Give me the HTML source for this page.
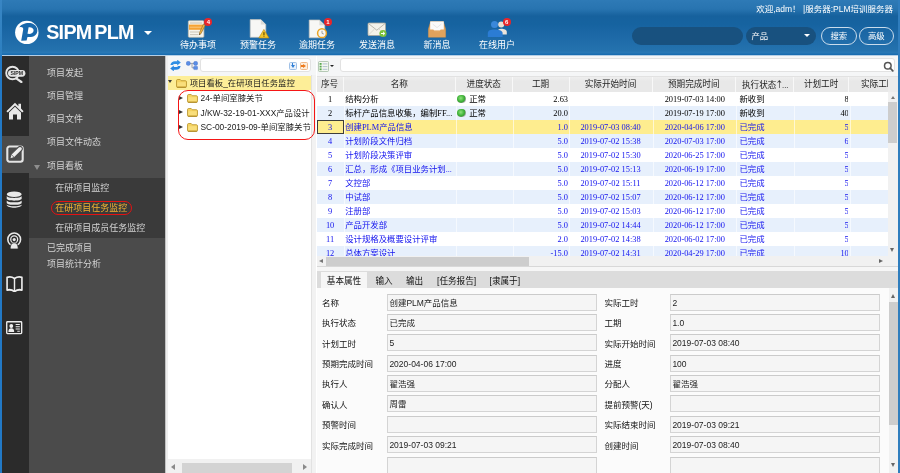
<!DOCTYPE html>
<html>
<head>
<meta charset="utf-8">
<title>SIPM PLM</title>
<style>
*{box-sizing:border-box;margin:0;padding:0}
html,body{width:900px;height:473px;overflow:hidden;background:#fff}
#wrap{position:absolute;left:-6px;top:-6px;width:912px;height:485px;background:#fff;filter:blur(.35px)}
#page{position:absolute;left:6px;top:6px;width:900px;height:473px}
body{position:relative;font-family:"Liberation Sans","Noto Sans CJK SC",sans-serif;font-size:8.4px;color:#222;line-height:1}
.abs{position:absolute}
/* header */
#hd{position:absolute;left:-6px;top:-6px;width:912px;height:61px;background:linear-gradient(to bottom,#2e7ab6 0,#2e7ab6 6px,#2874b0 15px,#16619d 22px,#1663a0 30px,#1e6aa8 44px,#2472ae 56px,#2a79b6 59px,#1a6db0 60px,#1a6db0 61px)}
#hdline{position:absolute;left:-6px;top:55px;width:912px;height:1px;background:#b5cfe6}
#edgeL{position:absolute;left:-6px;top:-6px;width:7.6px;height:485px;background:linear-gradient(#3a86c4 0,#2d80c0 61px,#2279c6 62px,#2279c6 100%)}
#edgeR{position:absolute;left:898px;top:-6px;width:8px;height:485px;background:#2f7dbd}
#brand{position:absolute;left:46.2px;top:20.4px;font-size:19.7px;font-weight:bold;color:#fff;line-height:24px;white-space:nowrap;letter-spacing:-0.7px;word-spacing:-2px}
.tb{position:absolute;top:0;width:60px;height:55px;text-align:center;color:#fff;font-size:9px}
.tb span{position:absolute;left:0;width:60px;top:40px;line-height:10px;white-space:nowrap}
.tb svg{position:absolute;left:19px;top:18px;overflow:visible}
.badge{position:absolute;width:8px;height:8px;border-radius:4px;background:#e8262a;color:#fff;font-size:6px;line-height:8px;text-align:center;font-weight:bold}
#welcome{position:absolute;right:7px;top:4px;color:#fff;font-size:8.5px;line-height:10px;white-space:nowrap}
.pill{position:absolute;top:26.5px;height:18.5px;border-radius:9.5px;background:#18517f;color:#fff;font-size:8.4px;line-height:18px}
.obtn{position:absolute;top:26.5px;height:18.5px;border-radius:9.5px;border:1px solid #c9dcec;color:#fff;font-size:8.4px;line-height:16.5px;text-align:center}
/* sidebar */
#ic{position:absolute;left:1.5px;top:56px;width:27px;height:423px;background:#2b2b2b}
#icsel{position:absolute;left:1.5px;top:135.8px;width:27px;height:36.8px;background:#4b4b4b}
#menu{position:absolute;left:28.5px;top:56px;width:136.5px;height:423px;background:#4b4b4b;color:#d4d4d4;font-size:9px}
#sub{position:absolute;left:0;top:122px;width:136.5px;height:60.2px;background:#3a3a3a}
.mi{position:absolute;left:18.5px;white-space:nowrap;line-height:10px}
.si{position:absolute;left:26.8px;white-space:nowrap;line-height:10px}
.sic{position:absolute;left:4px}
/* tree */
#strip{position:absolute;left:165px;top:56px;width:2.5px;height:423px;background:linear-gradient(to right,#c2c2c2 0,#c2c2c2 .9px,#eeeeee 1px,#eeeeee 100%)}
#ttb{position:absolute;left:167.5px;top:56px;width:148.5px;height:19.7px;background:#f5f6f7}
#tree{position:absolute;left:167.5px;top:75.7px;width:143.5px;height:383.3px;background:#fff;overflow:hidden}
#split{position:absolute;left:311.2px;top:75.4px;width:5.3px;height:403.6px;background:#f2f2f2;border-left:1px solid #e2e2e2}
.tr{position:absolute;left:0;width:143.5px;height:13.3px;white-space:nowrap;line-height:13.3px;font-size:8.4px;color:#1a1a1a}
.tr .tx{position:absolute;top:1.4px}
.tr svg{position:absolute}
.arr{position:absolute;width:0;height:0}
#redbox{position:absolute;left:177.8px;top:89.7px;width:137.2px;height:50.3px;border:1.4px solid #f51616;border-radius:10px}
#hsb1{position:absolute;left:167.5px;top:459px;width:143.5px;height:20px;background:#f1f1f1}
/* grid */
#gtb{position:absolute;left:316.5px;top:56px;width:581.5px;height:19.7px;background:#f5f6f7}
.sbox{position:absolute;background:#fff;border:1px solid #e2e2e2;border-radius:3px}
#gh{position:absolute;left:316.5px;top:75.7px;width:581.5px;height:16px;background:linear-gradient(#eeeeee,#e8e8e8 30%,#e8e8e8);font-family:"Liberation Serif","Noto Sans CJK SC",serif;font-size:8.6px;color:#222;overflow:hidden;border-top:1px solid #e2e2e2}
#gh span{position:absolute;top:0;height:16px;line-height:15px;text-align:center;border-right:1px solid #f8f8f8;white-space:nowrap;overflow:hidden}
#gb{position:absolute;left:316.5px;top:91.7px;width:571px;height:164.3px;overflow:hidden;background:#fff;font-family:"Liberation Serif","Noto Sans CJK SC",serif;font-size:8.4px}
.r{position:absolute;left:0;width:571px;height:14.06px;color:#000}
.r.alt{background:#e7f0fc}
.r.sel{background:#feed8f}
.r.blue{color:#1212ee}
.c{position:absolute;top:0;height:14.06px;line-height:15.2px;white-space:nowrap;overflow:hidden;border-left:1px solid rgba(255,255,255,.6)}
.c0{left:0;width:27.2px;text-align:center;border-left:0}
.c1{left:27.2px;width:112.3px;padding-left:.5px}
.c2{left:139.5px;width:56.5px;padding-left:12.2px}
.c3{left:196px;width:57px;text-align:right;padding-right:1.5px}
.c4{left:252px;width:83px;text-align:center}
.c5{left:336px;width:83.5px;text-align:center}
.c6{left:419.5px;width:57.7px;padding-left:2.5px}
.c7{left:477.2px;width:54.6px;text-align:right;padding-right:0}
.c7 b{font-weight:normal;margin-right:-.5px}
.c8{left:533.6px;width:37.4px}
.sel .c0{border:1px solid #3c3c3c;line-height:13.2px}
.dot{position:absolute;left:.3px;top:3px;width:8.4px;height:8.4px;border-radius:4.2px;background:radial-gradient(circle at 42% 40%,#8fe27c 0,#3bb035 50%,#49a045 60%,#a9aea9 72%,#b9bcb9 100%)}
#vsb1{position:absolute;left:887.5px;top:91.7px;width:10.5px;height:164.3px;background:#f1f1f1}
#hsb2{position:absolute;left:316.5px;top:256px;width:571px;height:10px;background:#f1f1f1}
#corner{position:absolute;left:887.5px;top:256px;width:10.5px;height:10px;background:#f1f1f1}
#gap{position:absolute;left:316.5px;top:266px;width:581.5px;height:5px;background:#f6f6f6;border-top:1px solid #d8d8d8}
/* tabs + detail */
#tabs{position:absolute;left:316.5px;top:271px;width:581.5px;height:16.5px;background:#dcdcdc;font-size:8.6px;color:#111}
#tabs span{position:absolute;top:0;height:16.5px;line-height:21.2px;white-space:nowrap}
#tabs .act{left:4.5px;width:46px;top:1px;height:15.5px;background:#f6f6f6;text-align:center;line-height:18.6px}
#det{position:absolute;left:316.5px;top:287.5px;width:581.5px;height:191.5px;background:#fbfbfb;overflow:hidden;font-size:8.5px}
.fr{position:absolute;left:0;width:572px;height:17px}
.fr label{position:absolute;top:1.4px;line-height:17.5px;white-space:nowrap;color:#111}
.l1{left:5.5px}
.l2{left:288px}
.in{position:absolute;top:0;height:17px;background:#f5f5f5;border:1px solid #d4d4d4;border-top-color:#cbcbcb;line-height:16.6px;padding-left:1.4px;white-space:nowrap;color:#222}
.i1{left:70.5px;width:210px}
.i2{left:353.5px;width:210px}
#vsb2{position:absolute;left:888.5px;top:287.5px;width:9.5px;height:191.5px;background:#f1f1f1}
.thumb{position:absolute;background:#cdcdcd}
.sa{position:absolute;width:0;height:0}
</style>
</head>
<body>
<div id="wrap"><div id="page">
<div id="hd"></div>
<div id="hdline"></div>

<!-- logo -->
<svg class="abs" style="left:14px;top:20px" width="26" height="26" viewBox="0 0 26 26">
  <circle cx="12.8" cy="12.4" r="11.7" fill="#fff"/>
  <path fill-rule="evenodd" d="M5.2 7.4 C7.6 3.4 15.4 1.6 20 4.4 C24.2 7 24.4 12.6 21.2 15.2 C18.8 17.2 15.6 17.3 13.5 16.9 L12.6 20.4 L7.2 20.8 L9.2 9.6 C9.5 7.6 8 6.6 5.2 7.4 Z M14.6 7.2 L13.5 13.8 C16.6 14.4 19.4 13.2 19.6 10.6 C19.8 8.2 17.4 6.8 14.6 7.2 Z" fill="#1868ac"/>
</svg>
<div id="brand">SIPM PLM</div>
<div class="sa" style="left:143.8px;top:31px;border-left:4.2px solid transparent;border-right:4.2px solid transparent;border-top:4.8px solid #fff"></div>

<!-- toolbar buttons -->
<div class="tb" style="left:168px">
  <svg width="20" height="20" viewBox="0 0 20 20">
    <rect x="1.3" y="2.7" width="15.6" height="16.6" rx="1" fill="#f7f4ec" stroke="#c4bfae" stroke-width=".7"/>
    <path d="M3 5 H15.2" stroke="#bdb8a8" stroke-width=".9"/>
    <rect x="2" y="6.6" width="14.2" height="5.2" fill="#f5a233"/>
    <path d="M2.6 9.2 H15.6" stroke="#fbd292" stroke-width=".8"/>
    <path d="M3 14 H12.2 M3 16.6 H11.4" stroke="#c6c1b2" stroke-width=".9"/>
    <path d="M16.4 6.2 L18.2 7.4 L14.2 15.2 L12.4 17 L12.6 14.4 Z" fill="#f0b648" stroke="#8f6420" stroke-width=".6"/>
    <path d="M12.4 17 L12.5 15.6 L13.5 16.1 Z" fill="#2e2e2e"/>
  </svg>
  <div class="badge" style="left:36.3px;top:17.8px">4</div>
  <span>待办事项</span>
</div>
<div class="tb" style="left:228px">
  <svg width="20" height="20" viewBox="0 0 20 20" style="left:21px">
    <path d="M1.2 1.6 H11.8 L16.8 6.6 V19.3 H1.2 Z" fill="#f7f7f5" stroke="#c0c0bc" stroke-width=".7"/>
    <path d="M11.8 1.6 V6.6 H16.8 Z" fill="#dcdcd8"/>
    <path d="M14.9 11.4 L20 20 H9.8 Z" fill="#f4c62c" stroke="#b8860b" stroke-width=".6"/>
    <rect x="14.4" y="14.2" width="1.1" height="2.8" fill="#5a4300"/>
    <rect x="14.4" y="17.6" width="1.1" height="1" fill="#5a4300"/>
  </svg>
  <span>预警任务</span>
</div>
<div class="tb" style="left:287px">
  <svg width="20" height="20" viewBox="0 0 20 20" style="left:21px">
    <path d="M1.2 2 H11.4 L16.8 7.2 V19.8 H1.2 Z" fill="#f7f7f5" stroke="#c0c0bc" stroke-width=".7"/>
    <path d="M11.4 2 V7.2 H16.8 Z" fill="#dcdcd8"/>
    <circle cx="14" cy="15.2" r="4.4" fill="#f6f6f2" stroke="#eaa424" stroke-width="1.5"/>
    <path d="M14 12.8 V15.4 L15.8 16" stroke="#8a8a8a" stroke-width=".8" fill="none"/>
  </svg>
  <div class="badge" style="left:36.8px;top:17.8px">1</div>
  <span>逾期任务</span>
</div>
<div class="tb" style="left:347px">
  <svg width="20" height="20" viewBox="0 0 20 20" style="left:20px">
    <rect x="1" y="5" width="17.5" height="12.5" rx="1" fill="#f4f2ea" stroke="#aaa79c" stroke-width=".8"/>
    <path d="M1.3 5.4 L9.8 12.2 L18.2 5.4" fill="none" stroke="#b4b1a6" stroke-width=".9"/>
    <path d="M1.3 17.2 L7.5 11 M18.2 17.2 L12 11" stroke="#cfccc2" stroke-width=".7"/>
    <circle cx="16" cy="15.5" r="3.6" fill="#7cc23c"/>
    <path d="M14 15.5 H17.4 M16 13.8 L17.8 15.5 L16 17.2" stroke="#fff" stroke-width="1" fill="none"/>
  </svg>
  <span>发送消息</span>
</div>
<div class="tb" style="left:407px">
  <svg width="20" height="20" viewBox="0 0 20 20" style="left:21px">
    <path d="M.4 19.3 V11 L2.6 3.6 H15.4 L17.6 11 V19.3 Z" fill="#e3a762" stroke="#c08a4c" stroke-width=".5"/>
    <path d="M2.2 12.4 V3.4 H15.8 V12.4 Z" fill="#fafafa"/>
    <path d="M.8 11.6 H5.4 L6.8 14.6 H11.2 L12.6 11.6 H17.2 V18.9 H.8 Z" fill="#e0a25c"/>
    <path d="M4.6 6 L9 9.6 L13.4 6" fill="none" stroke="#e4e4e4" stroke-width=".9"/>
  </svg>
  <span>新消息</span>
</div>
<div class="tb" style="left:467px">
  <svg width="20" height="20" viewBox="0 0 20 20" style="left:21px">
    <circle cx="13.2" cy="6.6" r="3" fill="#eadfd2"/>
    <path d="M9.6 16.6 V13.6 C9.6 11.8 11 10.8 13.2 10.8 C16.2 10.8 18.8 11.8 18.8 14 V16.6 Z" fill="#ece5dc"/>
    <circle cx="6.5" cy="6.6" r="3.5" fill="#3a88da"/>
    <path d="M-.2 18.9 V15 C-.2 12.4 2.6 11.4 6.5 11.4 C10.4 11.4 14.6 12.4 14.6 15 V18.9 Z" fill="#2b7cd4"/>
  </svg>
  <div class="badge" style="left:35.7px;top:17.8px">6</div>
  <span>在线用户</span>
</div>

<div id="welcome">欢迎,adm！ |服务器:PLM培训服务器</div>
<div class="pill" style="left:631.6px;width:111px"></div>
<div class="pill" style="left:746px;width:70px;padding-left:5.5px">产品</div>
<div class="sa" style="left:803.5px;top:34px;border-left:3.4px solid transparent;border-right:3.4px solid transparent;border-top:3.6px solid #fff"></div>
<div class="obtn" style="left:821px;width:35.5px">搜索</div>
<div class="obtn" style="left:858.7px;width:35.3px">高级</div>

<!-- sidebar -->
<div id="ic"></div>
<div id="icsel"></div>
<!-- icon: SIPM magnifier -->
<svg class="abs" style="left:5px;top:65px" width="22" height="18" viewBox="0 0 22 18">
  <circle cx="7.5" cy="8" r="6.3" fill="none" stroke="#e4e4e4" stroke-width="1.9"/>
  <rect x="3" y="4.9" width="17.4" height="6.8" rx="3.4" fill="#e4e4e4"/>
  <path d="M11.6 13.6 L16.4 17" stroke="#e4e4e4" stroke-width="2.2" stroke-linecap="round"/>
  <text x="11.8" y="10.2" font-family="Liberation Sans, sans-serif" font-size="5.2" font-weight="bold" fill="#2b2b2b" text-anchor="middle">SIPM</text>
</svg>
<!-- icon: home -->
<svg class="abs" style="left:6px;top:102px" width="18" height="18" viewBox="0 0 18 18">
  <path d="M0.4 9.2 L9 0.8 L12.4 4.2 V1.8 H15 V6.6 L17.6 9.2 L16.2 10.6 L9 3.6 L1.8 10.6 Z" fill="#e9e9e9"/>
  <path d="M3 10.4 L9 4.8 L15 10.4 V17.6 H11 V12.4 H7 V17.6 H3 Z" fill="#e9e9e9"/>
</svg>
<!-- icon: edit -->
<svg class="abs" style="left:6px;top:145px" width="18" height="18" viewBox="0 0 18 18">
  <rect x="1.3" y="1.5" width="15.4" height="15.2" rx="2.2" fill="none" stroke="#e4e4e4" stroke-width="2.1"/>
  <path d="M3.6 14 L5.2 9.2 L12.4 2.2 C13.3 1.3 14.8 1.3 15.7 2.2 C16.6 3.1 16.6 4.4 15.7 5.3 L8.6 12.4 Z" fill="#ededed" stroke="#4b4b4b" stroke-width="1.1"/>
  <path d="M5.6 9.8 L8 12.2" stroke="#4b4b4b" stroke-width=".7"/>
</svg>
<!-- icon: database -->
<svg class="abs" style="left:6.4px;top:190.6px" width="16.4" height="17.2" viewBox="0 0 18 19" preserveAspectRatio="none">
  <ellipse cx="9" cy="3.6" rx="8.2" ry="3.1" fill="#e9e9e9"/>
  <path d="M0.8 5.6 C2 8.4 16 8.4 17.2 5.6 V8.6 C16 11.4 2 11.4 0.8 8.6 Z" fill="#e9e9e9"/>
  <path d="M0.8 10.4 C2 13.2 16 13.2 17.2 10.4 V13.2 C16 16 2 16 0.8 13.2 Z" fill="#e9e9e9"/>
  <path d="M0.8 15 C2 17.6 16 17.6 17.2 15 V15.8 C16 19.4 2 19.4 0.8 15.8 Z" fill="#e9e9e9"/>
</svg>
<!-- icon: podcast -->
<svg class="abs" style="left:6.2px;top:232.4px" width="16.4" height="17.6" viewBox="0 0 18 19" preserveAspectRatio="none">
  <circle cx="9" cy="8" r="7" fill="none" stroke="#e9e9e9" stroke-width="1.7"/>
  <circle cx="9" cy="8" r="3.8" fill="none" stroke="#e9e9e9" stroke-width="1.4"/>
  <circle cx="9" cy="8.2" r="1.7" fill="#e9e9e9"/>
  <path d="M4.6 18.4 C4.6 13.6 6.4 11.6 9 11.6 C11.6 11.6 13.4 13.6 13.4 18.4 Z" fill="#e9e9e9" stroke="#2b2b2b" stroke-width=".9"/>
</svg>
<!-- icon: book -->
<svg class="abs" style="left:6px;top:275.6px" width="17" height="16.8" viewBox="0 0 19 17" preserveAspectRatio="none">
  <path d="M1.2 1.4 C4 0.6 7 1 9.5 2.6 C12 1 15 0.6 17.8 1.4 V14.2 C15 13.6 12 14 9.5 15.8 C7 14 4 13.6 1.2 14.2 Z" fill="none" stroke="#eee" stroke-width="1.8" stroke-linejoin="round"/>
  <path d="M9.5 2.6 V15.8" stroke="#eee" stroke-width="1.6"/>
</svg>
<!-- icon: id card -->
<svg class="abs" style="left:6.2px;top:321.4px" width="16.4" height="13.4" viewBox="0 0 18 14" preserveAspectRatio="none">
  <rect x=".8" y=".8" width="16.4" height="12.4" rx=".8" fill="none" stroke="#eee" stroke-width="1.5"/>
  <circle cx="5.8" cy="5.2" r="2.1" fill="#eee"/>
  <path d="M2.6 11.4 C2.6 8.6 4 7.6 5.8 7.6 C7.6 7.6 9 8.6 9 11.4 Z" fill="#eee"/>
  <path d="M10.6 3.6 H15.2 M10.6 6 H15.2 M10.6 8.4 H15.2 M12.4 10.8 H15.2" stroke="#eee" stroke-width="1.1"/>
</svg>

<div id="menu">
  <div id="sub"></div>
  <div class="mi" style="top:12px">项目发起</div>
  <div class="mi" style="top:35px">项目管理</div>
  <div class="mi" style="top:58px">项目文件</div>
  <div class="mi" style="top:81px">项目文件动态</div>
  <div class="sa" style="left:5.5px;top:108.5px;border-left:3.4px solid transparent;border-right:3.4px solid transparent;border-top:5.6px solid #8e8e8e"></div>
  <div class="mi" style="top:105px">项目看板</div>
  <div class="si" style="top:126.5px">在研项目监控</div>
  <div class="si" style="top:146.5px;color:#f2b431">在研项目任务监控</div>
  <div class="abs" style="left:22.2px;top:144.6px;width:81px;height:14.6px;border:1.5px solid #e41212;border-radius:7.3px"></div>
  <div class="si" style="top:166.5px">在研项目成员任务监控</div>
  <div class="mi" style="top:186.5px">已完成项目</div>
  <div class="mi" style="top:203px">项目统计分析</div>
</div>

<div id="strip"></div>
<!-- tree toolbar -->
<div id="ttb">
  <svg class="abs" style="left:2px;top:4px" width="11" height="11" viewBox="0 0 11 11">
    <path d="M0.4 5 C0.8 2.2 3 1 5.4 1.2 H7.2 V-.4 L10.8 2.6 L7.2 5.6 V4 H5.4 C4 4 3.2 4.2 2.8 5 Z" fill="#2f8ee4"/>
    <path d="M10.6 6 C10.2 8.8 8 10 5.6 9.8 H3.8 V11.4 L0.2 8.4 L3.8 5.4 V7 H5.6 C7 7 7.8 6.8 8.2 6 Z" fill="#2a86e0"/>
  </svg>
  <svg class="abs" style="left:18px;top:4.5px" width="12" height="10" viewBox="0 0 12 10">
    <path d="M2.6 2.4 H9.4 M6 2.4 V6.8 H8.4" fill="none" stroke="#8a8f98" stroke-width=".8"/>
    <circle cx="2.3" cy="2.4" r="2.1" fill="#5a8ee6" stroke="#4a6fc6" stroke-width=".4"/>
    <circle cx="9.6" cy="2.4" r="2.1" fill="#5a8ee6" stroke="#4a6fc6" stroke-width=".4"/>
    <rect x="7.6" y="5.2" width="4" height="3.4" rx=".9" fill="#5a8ee6" stroke="#4a6fc6" stroke-width=".4"/>
  </svg>
  <div class="sbox" style="left:32.8px;top:2px;width:110.4px;height:14px"></div>
  <div class="abs" style="left:121.5px;top:6px;width:7.5px;height:7.5px;border-radius:1.5px;background:#e9f1fb;border:.6px solid #9fc0e6"></div>
  <div class="sa" style="left:123px;top:8.6px;border-left:2.2px solid transparent;border-right:2.2px solid transparent;border-top:3px solid #2f7fd6"></div>
  <div class="abs" style="left:124.4px;top:7px;width:1.6px;height:2px;background:#2f7fd6"></div>
  <div class="abs" style="left:132.5px;top:6px;width:7.5px;height:7.5px;border-radius:1.5px;background:#fdeedd;border:.6px solid #eeb98a"></div>
  <div class="sa" style="left:135.4px;top:7.6px;border-top:2.2px solid transparent;border-bottom:2.2px solid transparent;border-left:3px solid #ee7a1c"></div>
  <div class="abs" style="left:133.8px;top:9px;width:2px;height:1.6px;background:#ee7a1c"></div>
</div>
<div id="tree">
  <div class="tr" style="top:-.3px;height:14.2px;background:#fdee98">
    <div class="sa" style="left:.6px;top:4.4px;border-left:2.3px solid transparent;border-right:2.3px solid transparent;border-top:3.6px solid #3a3a3a"></div>
    <svg style="left:8px;top:3.6px" width="11" height="9" viewBox="0 0 11 9"><path d="M.5 1.6 C.5 1 1 .5 1.6 .5 H4.2 L5.2 1.7 H9.4 C10 1.7 10.5 2.2 10.5 2.8 V7.4 C10.5 8 10 8.5 9.4 8.5 H1.6 C1 8.5 .5 8 .5 7.4 Z" fill="#f5d360" stroke="#b8922a" stroke-width=".8"/><path d="M1.4 3.2 H9.6 V7.2 H1.4 Z" fill="#f9df7c"/><path d="M1 8.1 H10" stroke="#a9852a" stroke-width=".8"/></svg>
    <span class="tx" style="left:22.2px">项目看板_在研项目任务监控</span>
  </div>
  <div class="tr" style="top:15.3px">
    <div class="sa" style="left:11.3px;top:5px;border-top:2.7px solid transparent;border-bottom:2.7px solid transparent;border-left:4.2px solid #333"></div>
    <svg style="left:19.4px;top:3.2px" width="11" height="9" viewBox="0 0 11 9"><path d="M.5 1.6 C.5 1 1 .5 1.6 .5 H4.2 L5.2 1.7 H9.4 C10 1.7 10.5 2.2 10.5 2.8 V7.4 C10.5 8 10 8.5 9.4 8.5 H1.6 C1 8.5 .5 8 .5 7.4 Z" fill="#f5d360" stroke="#b8922a" stroke-width=".8"/><path d="M1.4 3.2 H9.6 V7.2 H1.4 Z" fill="#f9df7c"/><path d="M1 8.1 H10" stroke="#a9852a" stroke-width=".8"/></svg>
    <span class="tx" style="left:33px">24-单间室膝关节</span>
  </div>
  <div class="tr" style="top:29.6px">
    <div class="sa" style="left:11.3px;top:5px;border-top:2.7px solid transparent;border-bottom:2.7px solid transparent;border-left:4.2px solid #333"></div>
    <svg style="left:19.4px;top:3.2px" width="11" height="9" viewBox="0 0 11 9"><path d="M.5 1.6 C.5 1 1 .5 1.6 .5 H4.2 L5.2 1.7 H9.4 C10 1.7 10.5 2.2 10.5 2.8 V7.4 C10.5 8 10 8.5 9.4 8.5 H1.6 C1 8.5 .5 8 .5 7.4 Z" fill="#f5d360" stroke="#b8922a" stroke-width=".8"/><path d="M1.4 3.2 H9.6 V7.2 H1.4 Z" fill="#f9df7c"/><path d="M1 8.1 H10" stroke="#a9852a" stroke-width=".8"/></svg>
    <span class="tx" style="left:33px">J/KW-32-19-01-XXX产品设计</span>
  </div>
  <div class="tr" style="top:43.9px">
    <div class="sa" style="left:11.3px;top:5px;border-top:2.7px solid transparent;border-bottom:2.7px solid transparent;border-left:4.2px solid #333"></div>
    <svg style="left:19.4px;top:3.2px" width="11" height="9" viewBox="0 0 11 9"><path d="M.5 1.6 C.5 1 1 .5 1.6 .5 H4.2 L5.2 1.7 H9.4 C10 1.7 10.5 2.2 10.5 2.8 V7.4 C10.5 8 10 8.5 9.4 8.5 H1.6 C1 8.5 .5 8 .5 7.4 Z" fill="#f5d360" stroke="#b8922a" stroke-width=".8"/><path d="M1.4 3.2 H9.6 V7.2 H1.4 Z" fill="#f9df7c"/><path d="M1 8.1 H10" stroke="#a9852a" stroke-width=".8"/></svg>
    <span class="tx" style="left:33px">SC-00-2019-09-单间室膝关节</span>
  </div>
</div>
<div id="split"></div>
<div id="redbox"></div>
<div id="hsb1">
  <div class="sa" style="left:3.2px;top:5px;border-top:3.2px solid transparent;border-bottom:3.2px solid transparent;border-right:4.6px solid #8a8a8a"></div>
  <div class="thumb" style="left:14.5px;top:3.5px;width:110px;height:16.5px;top:4.3px;background:#d3d3d3"></div>
  <div class="sa" style="left:135px;top:5px;border-top:3.2px solid transparent;border-bottom:3.2px solid transparent;border-left:4.6px solid #8a8a8a"></div>
</div>

<!-- grid toolbar -->
<div id="gtb">
  <svg class="abs" style="left:1px;top:4.5px" width="11" height="11" viewBox="0 0 11 11">
    <rect x=".5" y=".5" width="10" height="10" rx="1" fill="#f4f8f1" stroke="#9ab59a" stroke-width=".7"/>
    <rect x="1.6" y="2" width="2" height="1.8" fill="#58a84e"/><rect x="1.6" y="4.7" width="2" height="1.8" fill="#58a84e"/><rect x="1.6" y="7.4" width="2" height="1.8" fill="#58a84e"/>
    <path d="M4.6 2.9 H9.4 M4.6 5.6 H9.4 M4.6 8.3 H9.4" stroke="#9fb0c6" stroke-width=".8"/>
  </svg>
  <div class="sa" style="left:13.6px;top:9px;border-left:2.4px solid transparent;border-right:2.4px solid transparent;border-top:2.8px solid #222"></div>
  <div class="sbox" style="left:23px;top:2px;width:555.5px;height:14px"></div>
  <svg class="abs" style="left:566.5px;top:4.5px" width="11" height="11" viewBox="0 0 11 11">
    <circle cx="4.8" cy="4.8" r="3.3" fill="none" stroke="#555" stroke-width="1.5"/>
    <path d="M7.2 7.2 L9.8 9.8" stroke="#555" stroke-width="1.7" stroke-linecap="round"/>
  </svg>
</div>
<div id="gh">
  <span style="left:0;width:27.2px">序号</span>
  <span style="left:27.2px;width:112.3px">名称</span>
  <span style="left:139.5px;width:56.5px">进度状态</span>
  <span style="left:196px;width:57px">工期</span>
  <span style="left:253px;width:83px">实际开始时间</span>
  <span style="left:336px;width:83.5px">预期完成时间</span>
  <span style="left:419.5px;width:57.7px;text-align:left;padding-left:6px">执行状态<i style="font-style:normal;font-family:'Noto Sans CJK SC',sans-serif;margin:0 -1.6px 0 -1.4px">↑</i>...</span>
  <span style="left:477.2px;width:55.8px">计划工时</span>
  <span style="left:533px;width:38px;text-align:left;padding-left:11.5px;border-right:0">实际工时</span>
  <span style="left:571px;width:10.5px;border:0;background:#ececec"></span>
</div>
<div id="gb">
<div class="r" style="top:0.00px"><span class="c c0">1</span><span class="c c1">结构分析</span><span class="c c2"><i class="dot"></i>正常</span><span class="c c3">2.63</span><span class="c c4"></span><span class="c c5">2019-07-03 14:00</span><span class="c c6">新收到</span><span class="c c7"><b>8</b></span><span class="c c8"></span></div>
<div class="r alt" style="top:14.06px"><span class="c c0">2</span><span class="c c1">标杆产品信息收集，编制FF...</span><span class="c c2"><i class="dot"></i>正常</span><span class="c c3">20.0</span><span class="c c4"></span><span class="c c5">2019-07-19 17:00</span><span class="c c6">新收到</span><span class="c c7"><b>40</b></span><span class="c c8"></span></div>
<div class="r sel blue" style="top:28.12px"><span class="c c0">3</span><span class="c c1">创建PLM产品信息</span><span class="c c2"></span><span class="c c3">1.0</span><span class="c c4">2019-07-03 08:40</span><span class="c c5">2020-04-06 17:00</span><span class="c c6">已完成</span><span class="c c7"><b>5</b></span><span class="c c8"></span></div>
<div class="r alt blue" style="top:42.18px"><span class="c c0">4</span><span class="c c1">计划阶段文件归档</span><span class="c c2"></span><span class="c c3">5.0</span><span class="c c4">2019-07-02 15:38</span><span class="c c5">2020-07-03 17:00</span><span class="c c6">已完成</span><span class="c c7"><b>6</b></span><span class="c c8"></span></div>
<div class="r blue" style="top:56.24px"><span class="c c0">5</span><span class="c c1">计划阶段决策评审</span><span class="c c2"></span><span class="c c3">5.0</span><span class="c c4">2019-07-02 15:30</span><span class="c c5">2020-06-25 17:00</span><span class="c c6">已完成</span><span class="c c7"><b>5</b></span><span class="c c8"></span></div>
<div class="r alt blue" style="top:70.30px"><span class="c c0">6</span><span class="c c1">汇总，形成《项目业务计划...</span><span class="c c2"></span><span class="c c3">5.0</span><span class="c c4">2019-07-02 15:13</span><span class="c c5">2020-06-19 17:00</span><span class="c c6">已完成</span><span class="c c7"><b>5</b></span><span class="c c8"></span></div>
<div class="r blue" style="top:84.36px"><span class="c c0">7</span><span class="c c1">文控部</span><span class="c c2"></span><span class="c c3">5.0</span><span class="c c4">2019-07-02 15:11</span><span class="c c5">2020-06-12 17:00</span><span class="c c6">已完成</span><span class="c c7"><b>5</b></span><span class="c c8"></span></div>
<div class="r alt blue" style="top:98.42px"><span class="c c0">8</span><span class="c c1">中试部</span><span class="c c2"></span><span class="c c3">5.0</span><span class="c c4">2019-07-02 15:07</span><span class="c c5">2020-06-12 17:00</span><span class="c c6">已完成</span><span class="c c7"><b>5</b></span><span class="c c8"></span></div>
<div class="r blue" style="top:112.48px"><span class="c c0">9</span><span class="c c1">注册部</span><span class="c c2"></span><span class="c c3">5.0</span><span class="c c4">2019-07-02 15:03</span><span class="c c5">2020-06-12 17:00</span><span class="c c6">已完成</span><span class="c c7"><b>5</b></span><span class="c c8"></span></div>
<div class="r alt blue" style="top:126.54px"><span class="c c0">10</span><span class="c c1">产品开发部</span><span class="c c2"></span><span class="c c3">5.0</span><span class="c c4">2019-07-02 14:44</span><span class="c c5">2020-06-12 17:00</span><span class="c c6">已完成</span><span class="c c7"><b>5</b></span><span class="c c8"></span></div>
<div class="r blue" style="top:140.60px"><span class="c c0">11</span><span class="c c1">设计规格及概要设计评审</span><span class="c c2"></span><span class="c c3">2.0</span><span class="c c4">2019-07-02 14:38</span><span class="c c5">2020-06-02 17:00</span><span class="c c6">已完成</span><span class="c c7"><b>5</b></span><span class="c c8"></span></div>
<div class="r alt blue" style="top:154.66px"><span class="c c0">12</span><span class="c c1">总体方案设计</span><span class="c c2"></span><span class="c c3">-15.0</span><span class="c c4">2019-07-02 14:31</span><span class="c c5">2020-04-29 17:00</span><span class="c c6">已完成</span><span class="c c7"><b>10</b></span><span class="c c8"></span></div>
</div>
<div id="vsb1">
  <div class="sa" style="left:3.2px;top:4.8px;border-left:2.2px solid transparent;border-right:2.2px solid transparent;border-bottom:3.6px solid #777"></div>
  <div class="thumb" style="left:.8px;top:10.5px;width:9px;height:41.2px"></div>
  <div class="sa" style="left:2.9px;top:156px;border-left:2.2px solid transparent;border-right:2.2px solid transparent;border-top:4.4px solid #666"></div>
</div>
<div id="hsb2">
  <div class="sa" style="left:2.5px;top:2.6px;border-top:2.4px solid transparent;border-bottom:2.4px solid transparent;border-right:4.2px solid #777"></div>
  <div class="thumb" style="left:9.5px;top:.5px;width:202.7px;height:9.5px"></div>
  <div class="sa" style="left:562px;top:2.5px;border-top:2.5px solid transparent;border-bottom:2.5px solid transparent;border-left:4.6px solid #666"></div>
</div>
<div id="corner"></div>
<div id="gap"></div>

<div id="tabs">
  <span class="act">基本属性</span>
  <span style="left:59px">输入</span>
  <span style="left:89.5px">输出</span>
  <span style="left:120.5px">[任务报告]</span>
  <span style="left:173px">[隶属于]</span>
</div>
<div id="det">
<div class="fr" style="top:6.00px"><label class="l1">名称</label><span class="in i1">创建PLM产品信息</span><label class="l2">实际工时</label><span class="in i2">2</span></div>
<div class="fr" style="top:26.38px"><label class="l1">执行状态</label><span class="in i1">已完成</span><label class="l2">工期</label><span class="in i2">1.0</span></div>
<div class="fr" style="top:46.76px"><label class="l1">计划工时</label><span class="in i1">5</span><label class="l2">实际开始时间</label><span class="in i2">2019-07-03 08:40</span></div>
<div class="fr" style="top:67.14px"><label class="l1">预期完成时间</label><span class="in i1">2020-04-06 17:00</span><label class="l2">进度</label><span class="in i2">100</span></div>
<div class="fr" style="top:87.52px"><label class="l1">执行人</label><span class="in i1">翟浩强</span><label class="l2">分配人</label><span class="in i2">翟浩强</span></div>
<div class="fr" style="top:107.90px"><label class="l1">确认人</label><span class="in i1">周雷</span><label class="l2">提前预警(天)</label><span class="in i2"></span></div>
<div class="fr" style="top:128.28px"><label class="l1">预警时间</label><span class="in i1"></span><label class="l2">实际结束时间</label><span class="in i2">2019-07-03 09:21</span></div>
<div class="fr" style="top:148.66px"><label class="l1">实际完成时间</label><span class="in i1">2019-07-03 09:21</span><label class="l2">创建时间</label><span class="in i2">2019-07-03 08:40</span></div>
<div class="fr" style="top:169.04px"><label class="l1"></label><span class="in i1"></span><label class="l2"></label><span class="in i2"></span></div>
</div>
<div id="vsb2">
  <div class="sa" style="left:2.5px;top:6.8px;border-left:2.3px solid transparent;border-right:2.3px solid transparent;border-bottom:4.6px solid #666"></div>
  <div class="thumb" style="left:.5px;top:14.3px;width:9px;height:123.2px"></div>
  <div class="sa" style="left:2.5px;top:175.4px;border-left:2.3px solid transparent;border-right:2.3px solid transparent;border-top:4.4px solid #666"></div>
</div>
<div id="edgeL"></div>
<div id="edgeR"></div>
</div></div>
</body>
</html>
